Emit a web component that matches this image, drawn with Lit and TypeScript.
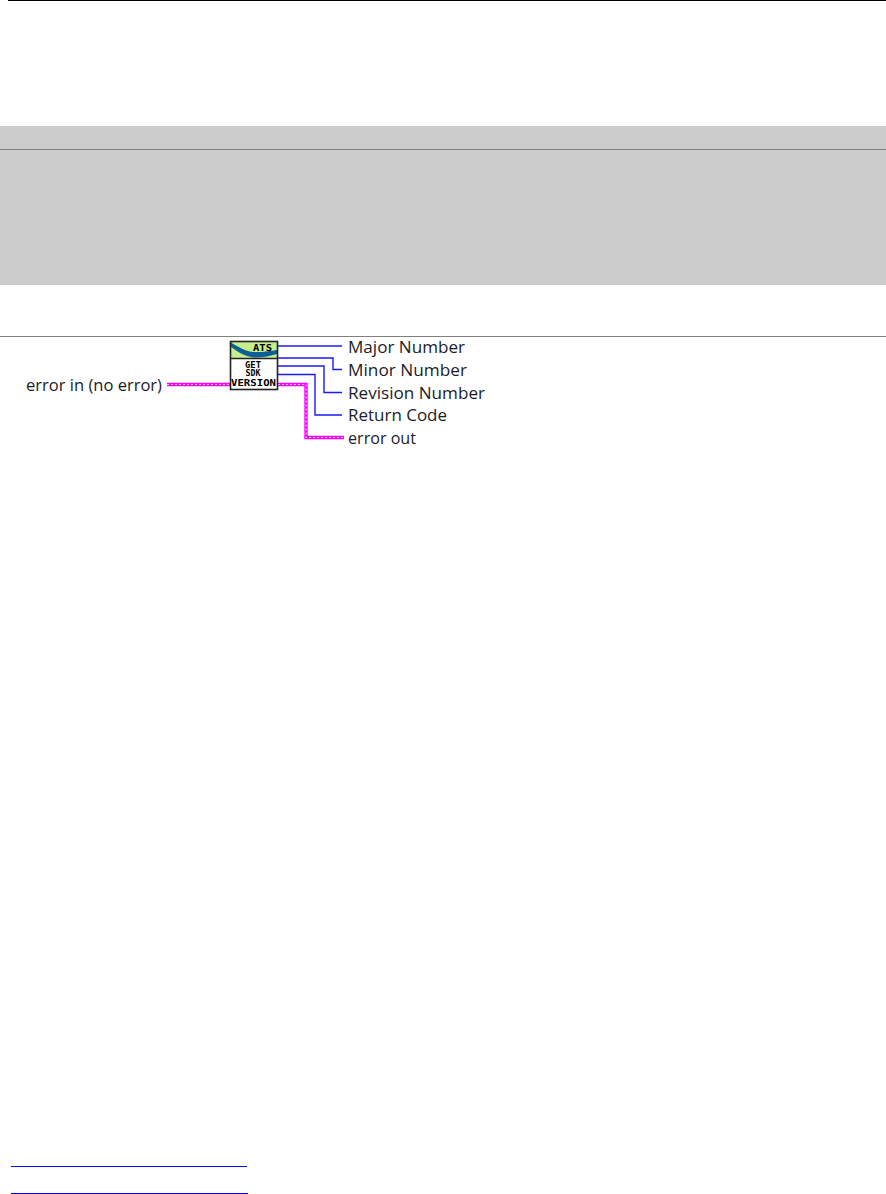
import { LitElement, html, css, svg } from "lit";
import { customElement } from "lit/decorators.js";

const blue = "#1a1aff";
const pink = "#ff00ff";

@customElement("app-root")
export class AppRoot extends LitElement {
  static styles = css`
    :host { display: block; width: 886px; height: 1194px; background: #fff; overflow: hidden; }
    .page { display: flex; flex-direction: column; height: 1194px; }
    .top-rule { height: 1px; background: #000; margin-left: 8px; flex: none; }
    .band { margin-top: 125px; height: 159px; background: #cccccc; flex: none; display: flex; flex-direction: column; }
    .band-head { height: 23px; border-bottom: 1px solid #808080; flex: none; }
    .mid-rule { margin-top: 51px; height: 1px; background: #808080; flex: none; }
    .diagram { display: block; flex: none; overflow: visible; }
    .diagram .label { font-family: "Open Sans", "Noto Sans", sans-serif; font-size: 17px; fill: #1c1c28; }
    .diagram .icon-text { font-family: "DejaVu Sans Mono", monospace; font-size: 9px; font-weight: 700; fill: #000; text-anchor: middle; }
    .footer { margin-top: auto; display: flex; flex-direction: column; }
    .link-a { margin-left: 11px; width: 236px; height: 1px; background: #0000ff; }
    .link-b { margin-left: 11px; width: 237px; height: 1px; background: #0000ff; margin-top: 26px; }
  `;

  private wires() {
    return svg`
      <g fill="none" stroke=${blue} stroke-width="1.4">
        <path d="M278 346H342" />
        <path d="M278 358H333V369.5H342" />
        <path d="M278 366H324V392.5H342" />
        <path d="M278 374.5H315V415H342" />
      </g>
      <g fill="none">
        <path d="M167 384.5H230" stroke=${pink} stroke-width="3.4" />
        <path d="M167 384.5H230" stroke="#ffd0ff" stroke-width="1" stroke-dasharray="2 2" />
        <path d="M278 384.5H306V437.5H344" stroke=${pink} stroke-width="3.4" />
        <path d="M278 384.5H306V437.5H344" stroke="#ffd0ff" stroke-width="1" stroke-dasharray="2 2" />
      </g>`;
  }

  private icon() {
    return svg`
      <rect x="231" y="342" width="46" height="47" fill="#fff" />
      <rect x="231" y="342" width="46" height="16" fill="#c4f08c" />
      <path d="M231 342.5C238 347 246 351.5 254 352C262 352.5 270 351 277 350V354C270 356 262 358 254 357.5C246 357 238 352 231 347Z" fill="#0f5f96" />
      <text class="icon-text" x="262.5" y="351" textLength="19" lengthAdjust="spacingAndGlyphs">ATS</text>
      <rect x="230.5" y="341.5" width="47" height="48" fill="none" stroke="#222" stroke-width="1.6" />
      <path d="M231 358.5H277" stroke="#222" stroke-width="1.6" />
      <text class="icon-text" x="253" y="367.5" textLength="16" lengthAdjust="spacingAndGlyphs">GET</text>
      <text class="icon-text" x="253" y="376" textLength="15" lengthAdjust="spacingAndGlyphs">SDK</text>
      <text class="icon-text" x="253.5" y="385.5" textLength="45" lengthAdjust="spacingAndGlyphs">VERSION</text>`;
  }

  private labels() {
    return svg`
      <text class="label" x="26" y="391" textLength="136" lengthAdjust="spacingAndGlyphs">error in (no error)</text>
      <text class="label" x="348" y="353" textLength="117" lengthAdjust="spacingAndGlyphs">Major Number</text>
      <text class="label" x="348" y="376" textLength="119" lengthAdjust="spacingAndGlyphs">Minor Number</text>
      <text class="label" x="348" y="398.5" textLength="137" lengthAdjust="spacingAndGlyphs">Revision Number</text>
      <text class="label" x="348" y="421" textLength="99" lengthAdjust="spacingAndGlyphs">Return Code</text>
      <text class="label" x="348" y="444" textLength="68" lengthAdjust="spacingAndGlyphs">error out</text>`;
  }

  render() {
    return html`
      <div class="page">
        <div class="top-rule"></div>
        <div class="band"><div class="band-head"></div></div>
        <div class="mid-rule"></div>
        <svg class="diagram" width="886" height="120" viewBox="0 337 886 120">
          ${this.wires()}${this.icon()}${this.labels()}
        </svg>
        <div class="footer">
          <div class="link-a"></div>
          <div class="link-b"></div>
        </div>
      </div>
    `;
  }
}
